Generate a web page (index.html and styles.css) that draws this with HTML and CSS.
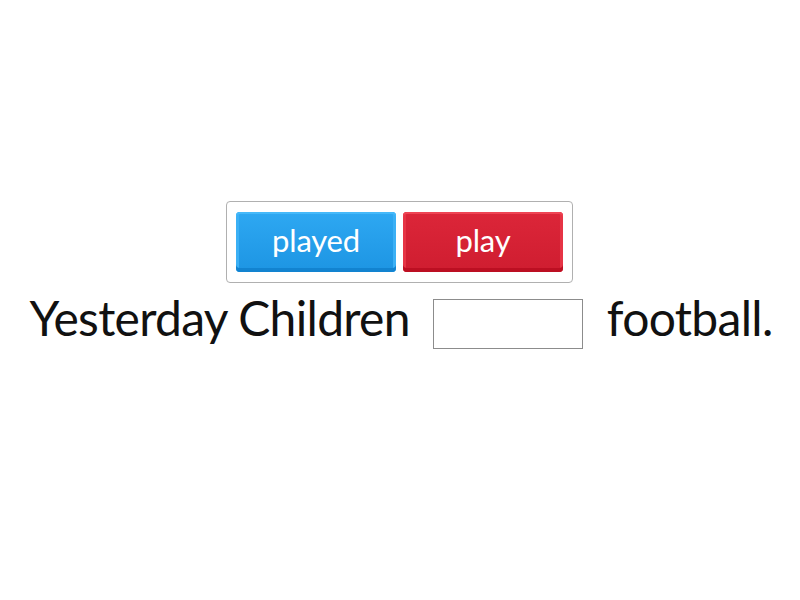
FILE: index.html
```html
<!DOCTYPE html>
<html>
<head>
<meta charset="utf-8">
<link rel="stylesheet" href="styles.css">
</head>
<body>
<div class="page">
  <div class="bank">
    <div class="tile tile-blue">played</div>
    <div class="tile tile-red">play</div>
  </div>
  <div class="sentence">
    <span class="word">Yesterday Children</span>
    <span class="blank"></span>
    <span class="word">football.</span>
  </div>
</div>
</body>
</html>
```
FILE: styles.css
```css
html, body {
  margin: 0;
  padding: 0;
  background: #ffffff;
}
.page {
  width: 800px;
  height: 600px;
  display: flex;
  flex-direction: column;
  align-items: center;
  padding-top: 201px;
  box-sizing: border-box;
  font-family: Lato, "Noto Sans", sans-serif;
}
.bank {
  display: flex;
  gap: 7px;
  padding: 10px 9px 10px 9px;
  border: 1px solid #b0b0b0;
  border-radius: 4px;
  margin-left: -1px;
}
.tile {
  width: 160px;
  height: 60px;
  border-radius: 4px;
  color: #ffffff;
  font-size: 31px;
  letter-spacing: -0.2px;
  display: flex;
  align-items: center;
  justify-content: center;
  box-sizing: border-box;
  padding-bottom: 5px;
}
.tile-blue {
  background: linear-gradient(#2ea8f2, #1d95e3);
  box-shadow: inset 0 2px 0 #45b9fa, inset 0 -4px 0 #1283d0, inset 3px 0 0 #3bb0f5, inset -3px 0 0 #3bb0f5;
}
.tile-red {
  background: linear-gradient(#dc2639, #cf1d30);
  box-shadow: inset 0 2px 0 #ef4454, inset 0 -4px 0 #bc0f22, inset 3px 0 0 #e63445, inset -3px 0 0 #e63445;
}
.sentence {
  display: flex;
  align-items: center;
  margin-top: 6px;
  font-size: 48px;
  color: #111111;
  margin-left: 2px;
}
.word {
  letter-spacing: -0.7px;
  padding-bottom: 12px;
}
.blank {
  width: 150px;
  height: 50px;
  border: 1px solid #8c8c8c;
  box-sizing: border-box;
  margin: 0 24px 0 23px;
}
```
